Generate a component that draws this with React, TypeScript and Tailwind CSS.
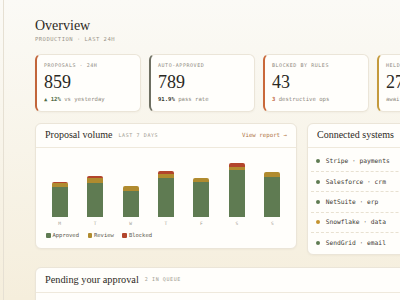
import React from "react";

const serif = "font-['Liberation_Serif',serif]";
const mono = "font-['DejaVu_Sans_Mono',monospace]";

type Bar = { day: string; green: number; review: number; blocked: number };
const bars: Bar[] = [
  { day: "M", green: 30, review: 4, blocked: 0.6 },
  { day: "T", green: 33.7, review: 4.5, blocked: 2.5 },
  { day: "W", green: 25.7, review: 4.7, blocked: 0 },
  { day: "T", green: 38.7, review: 4, blocked: 3.3 },
  { day: "F", green: 34.4, review: 4, blocked: 0 },
  { day: "S", green: 46.8, review: 3.3, blocked: 3.3 },
  { day: "S", green: 40, review: 4.4, blocked: 0 },
];

const systems = [
  { name: "Stripe · payments", color: "bg-[#5f7b52]" },
  { name: "Salesforce · crm", color: "bg-[#5f7b52]" },
  { name: "NetSuite · erp", color: "bg-[#5f7b52]" },
  { name: "Snowflake · data", color: "bg-[#c4932f]" },
  { name: "SendGrid · email", color: "bg-[#5f7b52]" },
];

function StatCard({
  accent,
  label,
  value,
  children,
}: {
  accent: string;
  label: string;
  value: string;
  children: React.ReactNode;
}) {
  return (
    <div
      className={`w-[106px] shrink-0 rounded-[6px] border border-[#ebe5d8] border-l-2 ${accent} bg-[#fffefb] pl-[7px] pt-[7px] pb-[8px] shadow-[0_1px_2px_rgba(80,60,20,0.04)]`}
    >
      <div className={`${mono} text-[5px] leading-[7px] tracking-[0.55px] uppercase text-[#8f8a7f] whitespace-nowrap`}>
        {label}
      </div>
      <div className={`${serif} mt-[4px] text-[18px] leading-[18px] text-[#2b2924]`}>{value}</div>
      <div className={`${mono} mt-[4.6px] text-[5.6px] leading-[7px] text-[#8f8a7f] whitespace-nowrap`}>
        {children}
      </div>
    </div>
  );
}

export default function App() {
  return (
    <div className="w-[400px] h-[300px] overflow-hidden flex bg-gradient-to-b from-[#fbfaf6] to-[#f5eedc]">
      <div className="w-[4px] shrink-0 border-r border-[#e6e0d3]" />
      <main className="shrink-0 w-[520px] pl-[31px] pt-[17.6px]">
        <h1 className={`${serif} text-[14px] leading-[16px] text-[#2d2a24]`}>Overview</h1>
        <div className={`${mono} mt-[2px] text-[5.5px] leading-[7px] tracking-[0.5px] uppercase text-[#9b968b]`}>
          Production · last 24h
        </div>

        <div className="mt-[11.5px] flex gap-[8px]">
          <StatCard accent="border-l-[#c2653a]" label="Proposals · 24h" value="859">
            <span className="font-bold text-[#4f6b45]">▲ 12%</span> vs yesterday
          </StatCard>
          <StatCard accent="border-l-[#6e6f62]" label="Auto-approved" value="789">
            <span className="font-bold text-[#3a3830]">91.9%</span> pass rate
          </StatCard>
          <StatCard accent="border-l-[#c9683a]" label="Blocked by rules" value="43">
            <span className="font-bold text-[#c2653a]">3</span> destructive ops
          </StatCard>
          <StatCard accent="border-l-[#c49a3c]" label="Held for review" value="27">
            awaiting you
          </StatCard>
        </div>

        <div className="mt-[11px] flex items-start gap-[10px]">
          {/* Chart card */}
          <section className="w-[262px] shrink-0 rounded-[6px] border border-[#ebe5d8] bg-[#fffefb] shadow-[0_1px_2px_rgba(80,60,20,0.04)]">
            <div className="h-[24.6px] px-[9px] flex items-center justify-between border-b border-[#efe9dc]">
              <div className="flex items-center gap-[6px]">
                <span className={`${serif} text-[10px] leading-[12px] text-[#2d2a24]`}>Proposal volume</span>
                <span className={`${mono} text-[5px] tracking-[0.6px] uppercase text-[#a09b90]`}>Last 7 days</span>
              </div>
              <span className={`${mono} text-[5.75px] text-[#b07646]`}>View report →</span>
            </div>
            <div className="px-[6px] pt-[4.4px] pb-[8.5px]">
              <div className="flex h-[64px] items-end">
                {bars.map((b, i) => (
                  <div key={i} className="flex-1 flex justify-center">
                    <div className="w-[16px] flex flex-col rounded-t-[2px] overflow-hidden">
                      <div className="bg-[#b3452c]" style={{ height: b.blocked }} />
                      <div className="bg-[#b08b2f]" style={{ height: b.review }} />
                      <div className="bg-[#5f7b52]" style={{ height: b.green }} />
                    </div>
                  </div>
                ))}
              </div>
              <div className="mt-[3.8px] flex">
                {bars.map((b, i) => (
                  <div key={i} className={`${mono} flex-1 text-center text-[4.5px] leading-[7px] text-[#a09b90]`}>
                    {b.day}
                  </div>
                ))}
              </div>
              <div className={`${mono} mt-[4.7px] pl-[4px] flex items-center text-[5.5px] leading-[7px] text-[#5a564c]`}>
                <span className="w-[4.5px] h-[4.5px] rounded-[1px] bg-[#5f7b52]" />
                <span className="ml-[2px]">Approved</span>
                <span className="ml-[8.5px] w-[4.5px] h-[4.5px] rounded-[1px] bg-[#b08b2f]" />
                <span className="ml-[2px]">Review</span>
                <span className="ml-[8.5px] w-[4.5px] h-[4.5px] rounded-[1px] bg-[#b3452c]" />
                <span className="ml-[2px]">Blocked</span>
              </div>
            </div>
          </section>

          {/* Connected systems */}
          <section className="w-[180px] shrink-0 rounded-[6px] border border-[#ebe5d8] bg-[#fffefb] shadow-[0_1px_2px_rgba(80,60,20,0.04)]">
            <div className="h-[24.6px] px-[9px] flex items-center border-b border-[#efe9dc]">
              <span className={`${serif} text-[10px] leading-[12px] text-[#2d2a24]`}>Connected systems</span>
            </div>
            <div className="pt-[3.2px] pb-[1px] px-[3px]">
              {systems.map((s, i) => (
                <div
                  key={i}
                  className={`h-[20.4px] flex items-center pl-[5px] ${
                    i < systems.length - 1 ? "border-b border-dashed border-[#e8e1d1]" : ""
                  }`}
                >
                  <span className={`w-[4px] h-[4px] rounded-full ${s.color}`} />
                  <span className={`${mono} ml-[5.7px] text-[6.25px] leading-[8px] text-[#3d3a33] whitespace-nowrap`}>
                    {s.name}
                  </span>
                </div>
              ))}
            </div>
          </section>
        </div>

        {/* Pending */}
        <section className="mt-[11.8px] w-[452px] h-[80px] rounded-[6px] border border-[#ebe5d8] bg-[#fffefb] shadow-[0_1px_2px_rgba(80,60,20,0.04)]">
          <div className="h-[25px] px-[9px] flex items-center gap-[6px] border-b border-[#efe9dc]">
            <span className={`${serif} text-[10.3px] leading-[12px] text-[#2d2a24]`}>Pending your approval</span>
            <span className={`${mono} text-[5px] tracking-[0.6px] uppercase text-[#a09b90]`}>2 in queue</span>
          </div>
        </section>
      </main>
    </div>
  );
}
